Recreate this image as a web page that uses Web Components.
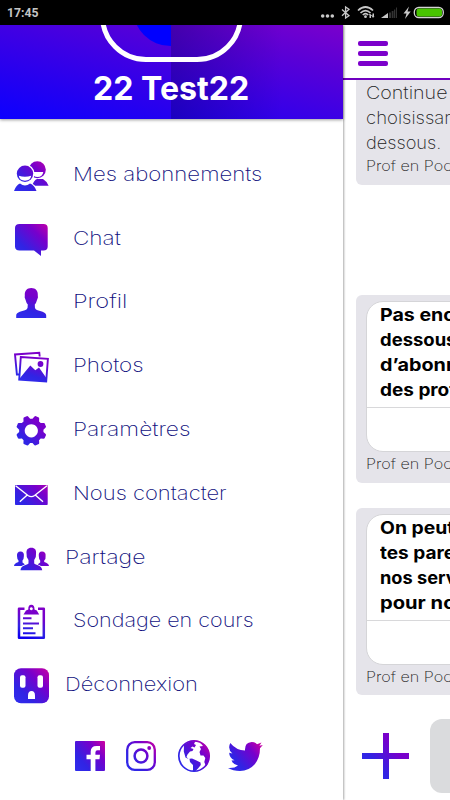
<!DOCTYPE html>
<html lang="fr">
<head>
<meta charset="utf-8">
<title>Prof en Poche</title>
<style>
html,body{margin:0;height:100%;overflow:hidden;background:#fff}
body{font-family:Inter,"Open Sans",sans-serif}
</style>
</head>
<body>
<app-shell></app-shell>
<script>
function define(name, html, after){
  const t=document.createElement('template'); t.innerHTML=html;
  customElements.define(name, class extends HTMLElement{
    constructor(){super();this.attachShadow({mode:'open'}).append(t.content.cloneNode(true));}
    connectedCallback(){ if(after) after(this,this.shadowRoot); }
  });
}

/* Text stretched horizontally to the width given in w */
define('fit-text', `<style>:host{display:block;white-space:nowrap}span{display:inline-block;transform-origin:0 50%}</style><span><slot></slot></span>`,
(el,root)=>{
  const s=root.querySelector('span'), n=s.offsetWidth, w=+el.getAttribute('w');
  if(n&&w) s.style.transform='scaleX('+w/n+')';
});

const ICONS={
people:[36,44,`<circle cx="24.3" cy="15.8" r="8.5"/><path d="M19 31.7Q21 26 24 25H30Q33.500 27 35.600 31.700Z"/><path fill="#fff" d="M18.500 18H30.300Q29.500 23 24.500 23Q20 23 18.500 18Z"/><circle cx="12" cy="19.800" r="9.600" fill="#fff"/><path d="M1 37Q3 31 7 29.500Q12 33.500 17 29.500Q21.500 31 23.500 37Z" stroke="#fff" stroke-width="2" paint-order="stroke"/><circle cx="12" cy="19.800" r="8.200"/><path fill="#fff" d="M5.800 21.800Q12 23.500 18.200 21.800Q17.500 26.700 12 26.700Q6.500 26.700 5.800 21.800Z"/>`],
chat:[36,44,`<path d="M6.500 6H30.500Q34.700 6 34.700 10V28.500Q34.700 32.600 30.500 32.600H28V38L21 32.600H6.500Q2 32.600 2 28.500V10Q2 6 6.500 6Z"/>`],
profil:[36,44,`<path d="M18.300 7C22.500 7 25.200 9.700 24.800 14.500Q25.500 16 24 19Q23.300 22 21.800 23.500Q21.500 27 23 28.500C27 30.300 33.200 31 33.200 34.500V37H3.200V34.500C3.200 31 9.500 30.300 13.500 28.500Q15 27 14.800 23.500Q13.300 22 12.600 19Q11.200 16 11.800 14.500C11.500 9.700 14 7 18.300 7Z"/>`],
photos:[36,44,`<path class="l" stroke-width="1.900" d="M6 29.500H3.900L2 9.500L26.300 7.800L26.700 11.500"/><path class="l" stroke-width="1.900" d="M7.800 12L34.900 13.800L33.200 36.500L6.200 34.600Z"/><path d="M7 33L17.300 20.500L22.300 25.200L26 22.500L33 32.500V36.500L7 34.500Z"/><circle cx="27.500" cy="19" r="2.900"/>`],
gear:[36,44,`<path fill-rule="evenodd" d="GEAR M18.300 15.200a6.600 6.600 0 1 0 .01 0Z"/>`],
mail:[36,44,`<rect x="2" y="12" width="32.700" height="20" rx=".8"/><path fill="none" stroke="#fff" stroke-width="1.400" d="M2.600 12.800L15 22.500Q18.300 24.800 21.600 22.500L34 12.800M6.800 28.800L14.500 21.800M30 28.800L22 21.800"/>`],
group:[36,44,`<path d="M7.500 14.500C10 14.500 11.200 16.200 10.900 19Q10.900 22 9.500 23.500V25.500L12 27.500L8.500 29H1Q1 26.500 5.500 25V23.500Q4 22 4 19C3.800 16.200 5 14.500 7.500 14.500Z"/><path d="M29 14.500C31.500 14.500 33 16.200 32.600 19Q33 22 31.200 23.500V25Q35.800 26.500 36 29H28L24.500 27.500L27.200 25.500V23.500Q25.800 22 25.800 19C25.500 16.200 26.500 14.500 29 14.500Z"/><path stroke="#fff" stroke-width="1.500" paint-order="stroke" d="M18.300 10.800C22 10.800 23.500 13 23 17Q23.500 20 21.200 23V26.500C24 28.500 29 28.300 29.200 33.300H7.500C7.700 28.300 13 28.500 15.500 26.500V23Q13 20 13.600 17C13 13 14.700 10.800 18.300 10.800Z"/>`],
clip:[36,44,`<path class="l" stroke-width="2.500" stroke-linejoin="round" d="M11.500 8.700H6V37.700H30.800V8.700H25"/><path fill-rule="evenodd" d="M10.500 14.500L13 10.500L15.300 9.500Q15 4.700 18.300 4.700Q21.700 4.700 21.500 9.500L23.800 10.500L26.200 14.500ZM18.300 7.200a1.500 1.500 0 1 0 .01 0Z"/><path class="l" stroke-width="1.900" d="M10 18.300H18.500M10 23.501L26 23.500M10 28.300H20M10 33.200H22.500"/>`],
outlet:[36,44,`<rect x="1" y="4.300" width="35" height="35" rx="7"/><g fill="#fff"><rect x="7" y="11.300" width="5.500" height="12.500" rx="2"/><rect x="24.500" y="11.300" width="5.500" height="12.500" rx="2"/><path d="M15 35V31.500Q15 27 18.500 27Q22 27 22 31.500V35Z"/></g>`],
facebook:[36,36,`<path fill-rule="evenodd" d="M4 3H32Q33 3 33 4V32Q33 33 32 33H23.400V21.300H27.500L28 16.800H23.400V14.500Q23.400 12.300 25.500 12.300H28V7.900H24.500Q18.700 7.900 18.700 13.500V16.800H14.500V21.300H18.700V33H4Q3 33 3 32V4Q3 3 4 3Z"/>`],
instagram:[36,36,`<rect class="l" stroke-width="2.300" x="4.200" y="4.200" width="27.600" height="27.600" rx="7.500"/><circle class="l" stroke-width="2.500" cx="18" cy="18" r="6.400"/><circle cx="26.200" cy="10" r="1.900"/>`],
globe:[36,36,`<circle class="l" stroke-width="1.700" cx="18" cy="18" r="15.200"/><path d="M8 6.500L14 3.500L19.500 3L18 6L20 7L18.500 9.500L16.500 8.500L14.500 10L17.500 11L16.500 13L14 13.500L11.500 16.500L10.500 19L12.500 21L9.500 19.500L7.800 13.500Z"/><path d="M13.500 20.800L16 20.500L20 22.300L24.500 24.500L24.800 27L22 30.500L19.500 33H17L17 27L14 24Z"/><path d="M24 4.500L28 6Q32.500 10 33.500 18Q33.300 24.500 30 28.500L28.300 24L29.300 20L27.500 17.500L24.500 17.500L23.500 14L25 11L23.500 8.500L27 8Z"/>`],
twitter:[36,36,`<path d="M1 30Q7.500 30.500 11 27.500Q6.500 27 4.500 22.500L7.500 22.300Q2.200 20 2.200 14.800L5.400 15.600Q.2 11 3.300 5Q9.200 12.300 18 12.500Q17.500 4.500 24.700 4Q28 4 30 6.200L34.500 4.500L32.400 7.800L35.800 7L33 10.300Q33 20 27.500 26.500Q22 32.800 13 33Q6 33 1 30Z"/>`],
plus:[48,48,`<path d="M21 1H27V21H47V27H27V47H21V27H0V21H21Z"/>`]
};
/* Gear outline with eight rounded teeth */
ICONS.gear[2]=ICONS.gear[2].replace('GEAR',(()=>{
  let d='';const pts=[[-17,12.200],[-10,14.700],[-7,15.300],[7,15.300],[10,14.700],[17,12.200]];
  for(let i=0;i<8;i++)for(const [a,r] of pts){const t=(i*45+22.5+a)*Math.PI/180;d+=(d?'L':'M')+(18.3+r*Math.cos(t)).toFixed(2)+' '+(21.800+r*Math.sin(t)).toFixed(2);}
  return d+'Z';
})());
define('grad-icon', `<style>:host{display:block;flex:none}svg{display:block;fill:url(#g)}.l{fill:none;stroke:url(#g)}</style><div></div>`,
(el,root)=>{
  const n=el.getAttribute('name'); if(!n) return;
  const [w,h,b]=ICONS[n];
  const steep=['profil','clip','photos'].includes(n);
  const hot=['facebook','instagram','globe','twitter'].includes(n)?'#d000a0':['profil','photos','gear','clip','plus'].includes(n)?'#8000c8':'#c000a8';
  root.querySelector('div').innerHTML=`<svg width="${w}" height="${h}" viewBox="0 0 ${w} ${h}"><defs><linearGradient id="g" gradientUnits="userSpaceOnUse" x1="${steep?w*.35:w*.08}" y1="${h*.85}" x2="${steep?w*.65:w*.95}" y2="${h*.12}"><stop offset="0" stop-color="${n=='clip'?'#1000ef':'#302cec'}"/><stop offset=".25" stop-color="#3024e4"/><stop offset=".68" stop-color="#7600cc"/><stop offset="1" stop-color="${hot}"/></linearGradient></defs>${b}</svg>`;
});

define('status-bar', `<style>
:host{display:flex;height:25px;background:#000;color:#c4c4c4;align-items:center;justify-content:space-between;padding-left:7px;font:700 13px/25px Roboto,sans-serif}
svg{display:block}</style><fit-text w="32"><slot></slot></fit-text>
<svg width="132" height="25" viewBox="318 0 132 25" fill="#c8c8c8">
<circle cx="322.700" cy="16" r="1.800"/><circle cx="327.500" cy="16" r="1.800"/><circle cx="332.300" cy="16" r="1.800"/>
<path fill="none" stroke="#c8c8c8" stroke-width="1.300" d="M342 9.500L349 15.700L345.600 18V7L349 9.300L342 15.700"/>
<g fill="none" stroke="#c8c8c8" stroke-width="1.700"><path d="M358 10.500Q365.500 3.500 373 10.500M360.500 13Q365.500 8 370.500 13M362.800 15Q365.500 12.400 368.200 15"/></g><circle cx="365.500" cy="16.700" r="1.400"/><path d="M370 13.500L372 16H371V18H369.500V15H368.800ZM373 18L371.500 15.500H372.500V13.500H374V16H374.500Z"/>
<path d="M381 18L388 13V18Z"/><path fill="#333" d="M389 12.500H391V18H389ZM391.700 11H393.500V18H391.700ZM394 9.500H395.300V18H394ZM396 7.500H397V18H396Z"/>
<path d="M409 6.500L403.500 13.500H406.500L405 19L410.700 11.500H407.500Z"/>
<rect x="414.300" y="7.500" width="29" height="10" rx="4.500" fill="none" stroke="#d4d4d4" stroke-width="1.300"/><rect x="416.500" y="8.600" width="25.500" height="7.800" rx="2.500" fill="#48c400"/></svg>`);

define('profile-head', `<style>
:host{display:block;position:relative;height:93.500px;overflow:hidden;background:linear-gradient(14deg,#0c00ff 0%,#2400f0 25%,#3e00e4 50%,#5a00d6 75%,#7a00cc 100%);box-shadow:0 1px 3px #0006;z-index:1}
.shade{position:absolute;inset:0 0 0 171px;background:linear-gradient(90deg,#00003040,#00003000 65%)}
.disc{position:absolute;left:133px;top:-54px;width:38px;height:75px;background:#0000ff;border-radius:38px 0 0 38px}
.ring{position:absolute;left:99.500px;top:-81px;width:133px;height:108px;border:5px solid #fff;border-radius:46px}
fit-text{position:relative;margin:43px 0 0 92.500px;color:#fff;font:700 32.500px/42px Inter}
</style><div class="disc"></div><div class="shade"></div><div class="ring"></div><fit-text w="156"><slot></slot></fit-text>`);

define('menu-row', `<style>
:host{display:flex;height:63.800px;align-items:center;padding-left:13px}
grad-icon{padding-top:4px}fit-text{color:#10107e;font:250 19.300px/30px Inter;margin-left:23.500px}
:host([tight]) fit-text{margin-left:16px}
</style><grad-icon></grad-icon><fit-text><slot></slot></fit-text>`,
(el,root)=>{
  const i=root.querySelector('grad-icon'), s=root.querySelector('fit-text').shadowRoot.querySelector('span');
  i.setAttribute('name',el.getAttribute('icon')); i.connectedCallback();
  s.style.transform='scaleX('+(+el.getAttribute('w'))/s.offsetWidth+')';
});

define('side-drawer', `<style>
:host{display:flex;flex-direction:column;width:342.500px;flex:none;position:relative;z-index:2;background:#fff;box-shadow:1px 0 2px #0005}
nav{padding-top:23.500px}
footer{display:flex;gap:15px;padding:21.500px 0 0 72px}
</style><profile-head>22 Test22</profile-head><nav><slot></slot></nav>
<footer><grad-icon name="facebook"></grad-icon><grad-icon name="instagram"></grad-icon><grad-icon name="globe" style="margin-left:2px"></grad-icon><grad-icon name="twitter" style="margin-left:-.5px"></grad-icon></footer>`);

define('chat-bubble', `<style>
:host{display:block;box-sizing:border-box;width:300px;background:#e5e4ea;border-radius:6px;padding:6px 10px;color:#222;font:250 17.500px/25px Inter}
.card{border:1px solid #d5d5d8;background:#fff;border-radius:17px;height:149px}
.txt{padding:0 0 0 13px;height:105px;border-bottom:1px solid #d8d8da;color:#000;font:700 17.500px/25px Inter}
.by{font:250 14.500px/22px Inter;color:#222;margin-top:1px}
:host([plain]){border-radius:0 0 6px 6px;padding-top:0}
:host([plain]) .card,:host([plain]) .txt{all:unset;display:block}
:host([plain]) .by{margin-top:0}
</style><div class="card"><div class="txt"><slot></slot></div></div><fit-text class="by" w="86">Prof en Poc</fit-text>`);

define('chat-pane', `<style>
:host{display:flex;flex-direction:column;flex:1;min-width:0;overflow:hidden;background:#fff}
header{height:53px;border-bottom:2px solid #7000c0;flex:none;box-sizing:content-box;display:flex;align-items:flex-start}
.menu{display:grid;gap:5px;margin:16px 0 0 15.500px;width:29.500px}
.menu i{height:5px;border-radius:2px;background:#7c00cb}
main{padding-left:13.500px;height:616px;flex:none;display:flex;flex-direction:column;align-items:flex-start}
chat-bubble{flex:none}
footer{display:flex;align-items:flex-start;padding:23px 0 0 19.500px}
footer div{width:200px;height:74px;border-radius:12px;background:#dadbdd;margin-left:20px;flex:none}
grad-icon{margin-top:13px}
</style><header><div class="menu"><i></i><i></i><i></i></div></header>
<main>
<chat-bubble plain style="height:105px"><fit-text w="81">Continue</fit-text><fit-text w="89">choisissan</fit-text><fit-text w="75">dessous.</fit-text></chat-bubble>
<chat-bubble style="height:188px;margin-top:110px"><fit-text w="75">Pas enc</fit-text><fit-text w="77">dessous</fit-text><fit-text w="78">d’abonn</fit-text><fit-text w="77">des prof</fit-text></chat-bubble>
<chat-bubble style="height:187px;margin-top:25px"><fit-text w="74">On peut</fit-text><fit-text w="75">tes pare</fit-text><fit-text w="77">nos serv</fit-text><fit-text w="76">pour no</fit-text></chat-bubble>
</main><footer><grad-icon name="plus"></grad-icon><div></div></footer>`);

define('app-shell', `<style>
:host{display:flex;flex-direction:column;width:450px;height:800px;overflow:hidden}
.body{display:flex;flex:1;min-height:0}
</style><status-bar>17:45</status-bar><div class="body"><side-drawer>
<menu-row icon="people" w="189">Mes abonnements</menu-row>
<menu-row icon="chat" w="48">Chat</menu-row>
<menu-row icon="profil" w="54">Profil</menu-row>
<menu-row icon="photos" w="71">Photos</menu-row>
<menu-row icon="gear" w="117">Paramètres</menu-row>
<menu-row icon="mail" w="154">Nous contacter</menu-row>
<menu-row icon="group" w="80" tight>Partage</menu-row>
<menu-row icon="clip" w="181">Sondage en cours</menu-row>
<menu-row icon="outlet" w="133" tight>Déconnexion</menu-row>
</side-drawer><chat-pane></chat-pane></div>`);
</script>
</body>
</html>
